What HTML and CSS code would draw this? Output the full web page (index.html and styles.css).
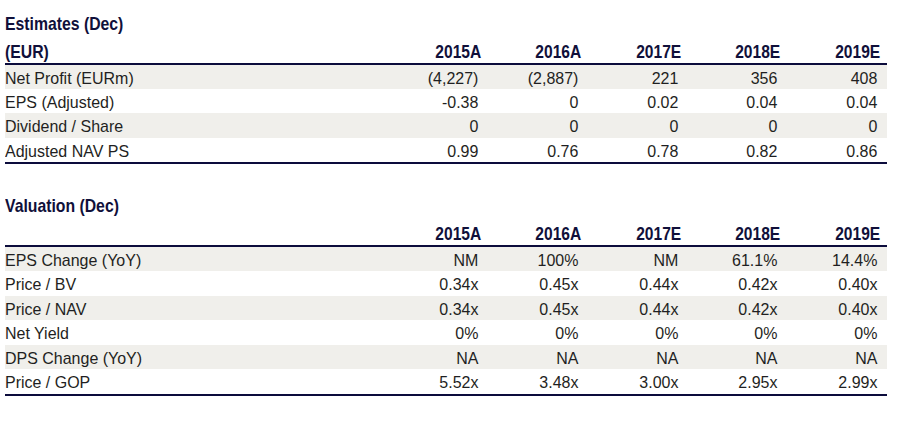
FILE: index.html
```html
<!DOCTYPE html>
<html>
<head>
<meta charset="utf-8">
<link rel="stylesheet" href="styles.css">
</head>
<body>
<div class="page">
  <section class="block">
    <h2 class="title">Estimates (Dec)</h2>
    <div class="grid">
      <div class="row head">
        <div class="label unit">(EUR)</div>
        <div class="num">2015A</div><div class="num">2016A</div><div class="num">2017E</div><div class="num">2018E</div><div class="num">2019E</div>
      </div>
      <div class="row shade">
        <div class="label">Net Profit (EURm)</div>
        <div class="num">(4,227)</div><div class="num">(2,887)</div><div class="num">221</div><div class="num">356</div><div class="num">408</div>
      </div>
      <div class="row">
        <div class="label">EPS (Adjusted)</div>
        <div class="num">-0.38</div><div class="num">0</div><div class="num">0.02</div><div class="num">0.04</div><div class="num">0.04</div>
      </div>
      <div class="row shade">
        <div class="label">Dividend / Share</div>
        <div class="num">0</div><div class="num">0</div><div class="num">0</div><div class="num">0</div><div class="num">0</div>
      </div>
      <div class="row last">
        <div class="label">Adjusted NAV PS</div>
        <div class="num">0.99</div><div class="num">0.76</div><div class="num">0.78</div><div class="num">0.82</div><div class="num">0.86</div>
      </div>
    </div>
  </section>
  <section class="block second">
    <h2 class="title">Valuation (Dec)</h2>
    <div class="grid">
      <div class="row head">
        <div class="label unit"></div>
        <div class="num">2015A</div><div class="num">2016A</div><div class="num">2017E</div><div class="num">2018E</div><div class="num">2019E</div>
      </div>
      <div class="row shade">
        <div class="label">EPS Change (YoY)</div>
        <div class="num">NM</div><div class="num">100%</div><div class="num">NM</div><div class="num">61.1%</div><div class="num">14.4%</div>
      </div>
      <div class="row">
        <div class="label">Price / BV</div>
        <div class="num">0.34x</div><div class="num">0.45x</div><div class="num">0.44x</div><div class="num">0.42x</div><div class="num">0.40x</div>
      </div>
      <div class="row shade">
        <div class="label">Price / NAV</div>
        <div class="num">0.34x</div><div class="num">0.45x</div><div class="num">0.44x</div><div class="num">0.42x</div><div class="num">0.40x</div>
      </div>
      <div class="row">
        <div class="label">Net Yield</div>
        <div class="num">0%</div><div class="num">0%</div><div class="num">0%</div><div class="num">0%</div><div class="num">0%</div>
      </div>
      <div class="row shade">
        <div class="label">DPS Change (YoY)</div>
        <div class="num">NA</div><div class="num">NA</div><div class="num">NA</div><div class="num">NA</div><div class="num">NA</div>
      </div>
      <div class="row last">
        <div class="label">Price / GOP</div>
        <div class="num">5.52x</div><div class="num">3.48x</div><div class="num">3.00x</div><div class="num">2.95x</div><div class="num">2.99x</div>
      </div>
    </div>
  </section>
</div>
</body>
</html>
```
FILE: styles.css
```css
html, body {
  margin: 0;
  padding: 0;
  background: #ffffff;
}

.page {
  width: 882px;
  padding: 12.5px 0 0 5px;
  font-family: "Liberation Sans", Arial, sans-serif;
  color: #1f1f22;
}

.block.second {
  margin-top: 30.7px;
}

.title {
  margin: 0;
  font-family: "Liberation Sans", Arial, sans-serif;
  font-weight: bold;
  font-size: 19px;
  line-height: 22px;
  color: #10103a;
  transform: scaleX(0.83);
  transform-origin: left center;
}

.grid {
  display: flex;
  flex-direction: column;
}

.row {
  display: grid;
  grid-template-columns: 383px repeat(5, 99.8px);
  height: 24.45px;
  box-sizing: border-box;
  padding-top: 5px;
  font-size: 17px;
  line-height: 18px;
  white-space: nowrap;
}

.row.shade {
  background: #f0efeb;
}

.row.head {
  box-sizing: content-box;
  padding-top: 6px;
  height: 22px;
  border-bottom: 2.5px solid #0c0c3c;
  font-weight: bold;
  font-size: 19px;
  line-height: 22px;
  color: #10103a;
}

.row.last {
  box-sizing: content-box;
  padding-top: 5px;
  height: 19.45px;
  border-bottom: 2.7px solid #0c0c3c;
}

.label {
  text-align: left;
  transform: scaleX(0.94);
  transform-origin: left center;
}

.num {
  text-align: right;
  padding-right: 10px;
  transform: scaleX(0.94);
  transform-origin: right center;
}

.row.head .label {
  transform: scaleX(0.83);
}

.row.head .num {
  padding-right: 8px;
  transform: scaleX(0.82);
}
```
